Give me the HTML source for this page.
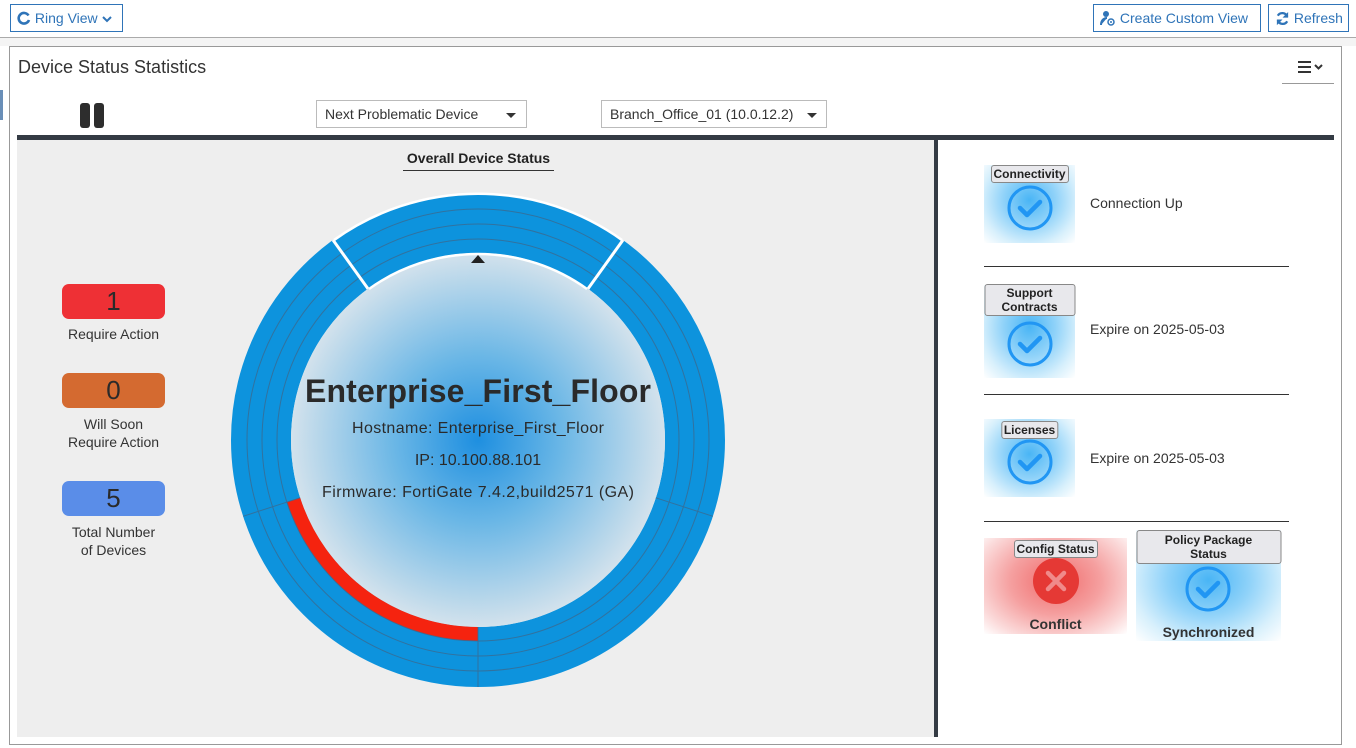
<!DOCTYPE html>
<html><head><meta charset="utf-8"><style>
*{box-sizing:border-box;margin:0;padding:0}
body{width:1356px;height:748px;position:relative;background:#fff;font-family:"Liberation Sans",sans-serif;color:#333;overflow:hidden}
.a{position:absolute}
.btn{position:absolute;border:1px solid #2f74b8;color:#2f74b8;font-size:14px;height:28px;line-height:26px;padding:0 6px;background:#fff;white-space:nowrap}
.sel{position:absolute;border:1px solid #bbb;background:#fff;font-size:14px;height:28px;line-height:26px;padding-left:8px;color:#333}
.badge{position:absolute;left:62px;width:103px;height:35px;border-radius:7px;text-align:center;font-size:26px;line-height:35px;color:#2a2a2a}
.lbl{position:absolute;left:40px;width:147px;text-align:center;font-size:14px;line-height:18px;color:#333}
.card{position:absolute;width:91px;height:78px;background:radial-gradient(ellipse at 50% 45%,#49b5f5 0%,#8fd2f9 40%,#d8f0fc 75%,#fff 100%)}
.tag{position:absolute;left:50%;transform:translateX(-50%);background:#e8e8ec;border:1px solid #888;border-radius:3px;font-weight:bold;font-size:12px;line-height:14px;padding:1px 2px;text-align:center;white-space:nowrap;color:#222}
.hr{position:absolute;left:984px;width:305px;height:1px;background:#333}
.rt{position:absolute;left:1090px;font-size:14px;color:#333}
</style></head><body>
<div class="btn" style="left:10px;top:4px;width:113px;">
<svg width="14" height="14" viewBox="0 0 14 14" style="vertical-align:-2px"><path d="M11.5 4.5A5.3 5.3 0 1 0 12 9" fill="none" stroke="#2f74b8" stroke-width="2.6"/></svg> Ring View <svg width="10" height="8" viewBox="0 0 10 8" style="vertical-align:0"><path d="M1 2l4 4 4-4" fill="none" stroke="#2f74b8" stroke-width="2"/></svg></div>
<div class="btn" style="left:1093px;top:4px;width:168px;"><svg width="16" height="16" viewBox="0 0 16 16" style="vertical-align:-3px"><circle cx="6" cy="4" r="3" fill="#2f74b8"/><path d="M1 15c0-5 3-7 6-7" fill="#2f74b8" stroke="#2f74b8" stroke-width="2"/><circle cx="11" cy="12" r="3" fill="none" stroke="#2f74b8" stroke-width="1.5"/><circle cx="11" cy="12" r="1" fill="#2f74b8"/></svg> Create Custom View</div>
<div class="btn" style="left:1268px;top:4px;width:81px;"><svg width="15" height="15" viewBox="0 0 16 16" style="vertical-align:-3px"><path d="M13 6A5.5 5.5 0 0 0 3 5M3 10a5.5 5.5 0 0 0 10 1" fill="none" stroke="#2f74b8" stroke-width="2.4"/><path d="M14 1v6H8z M2 15V9h6z" fill="#2f74b8"/></svg> Refresh</div>
<div class="a" style="left:0;top:37px;width:1356px;height:1px;background:#aaa"></div>
<div class="a" style="left:0;top:38px;width:1356px;height:8px;background:#f4f4f4"></div>
<div class="a" style="left:9px;top:46px;width:1333px;height:699px;border:1px solid #999;background:#fff"></div>
<div class="a" style="left:18px;top:57px;font-size:18px;color:#333">Device Status Statistics</div>
<svg class="a" style="left:1297px;top:60px" width="30" height="14" viewBox="0 0 30 14"><path d="M1 2h13M1 7h13M1 12h13" stroke="#333" stroke-width="2"/><path d="M18 5l3.5 3.5L25 5" fill="none" stroke="#333" stroke-width="2"/></svg>
<div class="a" style="left:1282px;top:83px;width:52px;height:1px;background:#999"></div>
<div class="a" style="left:80px;top:103px;width:10px;height:25px;background:#2d2d2d;border-radius:3px"></div>
<div class="a" style="left:94px;top:103px;width:10px;height:25px;background:#2d2d2d;border-radius:3px"></div>
<div class="sel" style="left:316px;top:100px;width:211px;">Next Problematic Device<span class="a" style="right:10px;top:12px;border:5px solid transparent;border-top:5px solid #333;border-bottom:0"></span></div>
<div class="sel" style="left:601px;top:100px;width:226px;">Branch_Office_01 (10.0.12.2)<span class="a" style="right:9px;top:12px;border:5px solid transparent;border-top:5px solid #333;border-bottom:0"></span></div>
<div class="a" style="left:17px;top:135px;width:1317px;height:5px;background:#343b44"></div>
<div class="a" style="left:17px;top:140px;width:917px;height:597px;background:#eeeeee"></div>
<div class="a" style="left:934px;top:140px;width:4px;height:597px;background:#343b44"></div>
<div class="a" style="left:403px;top:150px;width:151px;text-align:center;font-size:14px;font-weight:bold;color:#222;border-bottom:1px solid #333;padding-bottom:4px">Overall Device Status</div>
<div class="badge" style="top:284px;background:#ee3035">1</div>
<div class="lbl" style="top:325px">Require Action</div>
<div class="badge" style="top:373px;background:#d46a30">0</div>
<div class="lbl" style="top:415px">Will Soon<br>Require Action</div>
<div class="badge" style="top:481px;background:#5a8de8">5</div>
<div class="lbl" style="top:523px">Total Number<br>of Devices</div>
<svg class="a" style="left:0;top:0" width="940" height="748">
<defs><radialGradient id="g" cx="50%" cy="50%" r="50%"><stop offset="0" stop-color="#1e8fe0"/><stop offset="0.45" stop-color="#6bb7e6"/><stop offset="1" stop-color="#d3e2ec"/></radialGradient></defs>
<circle cx="478" cy="440" r="217" fill="none" stroke="#0d93dd" stroke-width="60"/>
<circle cx="478" cy="440" r="187" fill="url(#g)"/>
<circle cx="478" cy="440" r="194" fill="none" stroke="#f5230f" stroke-width="14" stroke-dasharray="243.8 2000" transform="rotate(90 478 440)"/>
<g fill="none" stroke="#3b6a90" stroke-width="1" opacity="0.8">
<circle cx="478" cy="440" r="201"/><circle cx="478" cy="440" r="216"/><circle cx="478" cy="440" r="231"/>
<path d="M655.8 497.8L712.9 516.3M300.2 497.8L243.1 516.3M478 627V687"/>
</g>
<path d="M333 240L368 288.7M623 240L588 288.7" stroke="#fff" stroke-width="3"/>
<path d="M333.8 240.2A247 247 0 0 1 622.2 240.2" fill="none" stroke="#fff" stroke-width="2.5"/>
<path d="M369 289A187 187 0 0 1 587 289" fill="none" stroke="#fff" stroke-width="2.5"/>
<path d="M471 263h14l-7-8z" fill="#222"/>
<text x="478" y="402" text-anchor="middle" font-family="Liberation Sans,sans-serif" font-weight="bold" font-size="32" fill="#2a2a2a" textLength="346">Enterprise_First_Floor</text>
<text x="478" y="433" text-anchor="middle" font-family="Liberation Sans,sans-serif" font-size="16" fill="#2a2a2a" textLength="252">Hostname: Enterprise_First_Floor</text>
<text x="478" y="465" text-anchor="middle" font-family="Liberation Sans,sans-serif" font-size="16" fill="#2a2a2a">IP: 10.100.88.101</text>
<text x="478" y="497" text-anchor="middle" font-family="Liberation Sans,sans-serif" font-size="16" fill="#2a2a2a" textLength="312">Firmware: FortiGate 7.4.2,build2571 (GA)</text>
</svg>
<div class="card" style="left:984px;top:165px"><div class="tag" style="top:0">Connectivity</div>
<svg class="a" style="left:23px;top:20px" width="46" height="46"><circle cx="23" cy="23" r="21" fill="none" stroke="#2196f3" stroke-width="3"/><path d="M13 23l7 7 13-13" fill="none" stroke="#2196f3" stroke-width="4.5" stroke-linecap="round" stroke-linejoin="round"/></svg></div>
<div class="rt" style="top:195px">Connection Up</div>
<div class="hr" style="top:266px"></div>
<div class="card" style="left:984px;top:285px;height:93px"><div class="tag" style="top:-1px;width:91px">Support<br>Contracts</div>
<svg class="a" style="left:23px;top:36px" width="46" height="46"><circle cx="23" cy="23" r="21" fill="none" stroke="#2196f3" stroke-width="3"/><path d="M13 23l7 7 13-13" fill="none" stroke="#2196f3" stroke-width="4.5" stroke-linecap="round" stroke-linejoin="round"/></svg></div>
<div class="rt" style="top:321px">Expire on 2025-05-03</div>
<div class="hr" style="top:394px"></div>
<div class="card" style="left:984px;top:419px"><div class="tag" style="top:2px">Licenses</div>
<svg class="a" style="left:23px;top:20px" width="46" height="46"><circle cx="23" cy="23" r="21" fill="none" stroke="#2196f3" stroke-width="3"/><path d="M13 23l7 7 13-13" fill="none" stroke="#2196f3" stroke-width="4.5" stroke-linecap="round" stroke-linejoin="round"/></svg></div>
<div class="rt" style="top:450px">Expire on 2025-05-03</div>
<div class="hr" style="top:521px"></div>
<div class="card" style="left:984px;top:538px;width:143px;height:96px;background:radial-gradient(ellipse at 50% 45%,#f06a6a 0%,#f5a0a0 45%,#fbdada 80%,#fff 100%)"><div class="tag" style="top:2px">Config Status</div>
<svg class="a" style="left:49px;top:20px" width="46" height="46"><circle cx="23" cy="23" r="23" fill="#e53935"/><path d="M15 15l16 16M31 15L15 31" stroke="#f08a8a" stroke-width="4.5" stroke-linecap="round"/></svg>
<div class="a" style="left:0;width:143px;top:78px;text-align:center;font-weight:bold;font-size:14px;color:#333">Conflict</div></div>
<div class="card" style="left:1136px;top:530px;width:145px;height:111px"><div class="tag" style="top:0;width:145px;padding:2px">Policy Package<br>Status</div>
<svg class="a" style="left:49px;top:36px" width="46" height="46"><circle cx="23" cy="23" r="21" fill="none" stroke="#2196f3" stroke-width="3"/><path d="M13 23l7 7 13-13" fill="none" stroke="#2196f3" stroke-width="4.5" stroke-linecap="round" stroke-linejoin="round"/></svg>
<div class="a" style="left:0;width:145px;top:94px;text-align:center;font-weight:bold;font-size:14px;color:#333">Synchronized</div></div>
<div class="a" style="left:0;top:90px;width:3px;height:30px;background:#6a8fb8"></div>
</body></html>
